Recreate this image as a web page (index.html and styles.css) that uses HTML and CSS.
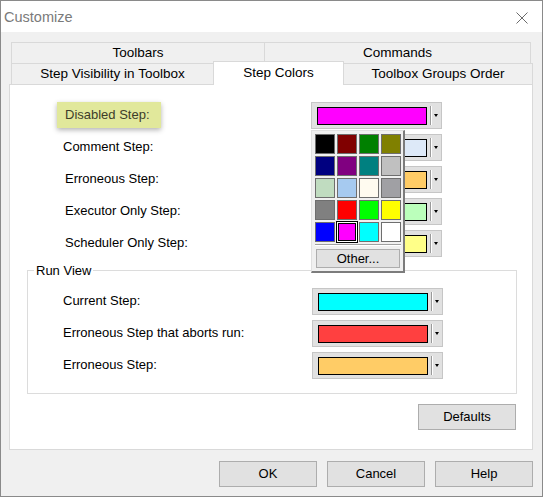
FILE: index.html
```html
<!DOCTYPE html>
<html>
<head>
<meta charset="utf-8">
<link rel="stylesheet" href="styles.css">
</head>
<body>
<div class="window">
  <div class="titlebar">
    <span class="title">Customize</span>
    <svg class="close" width="12" height="12" viewBox="0 0 12 12"><path d="M0.5 0.5 L11.5 11.5 M11.5 0.5 L0.5 11.5" stroke="#6b6b6b" stroke-width="1" fill="none"/></svg>
  </div>
  <div class="body">
    <div class="tabs">
      <div class="tabrow">
        <div class="tab t-toolbars">Toolbars</div>
        <div class="tab t-commands last">Commands</div>
      </div>
      <div class="tabrow">
        <div class="tab t-visibility">Step Visibility in Toolbox</div>
        <div class="tab t-colors active">Step Colors</div>
        <div class="tab t-groups last">Toolbox Groups Order</div>
      </div>
    </div>
    <div class="panel">
      <div class="rows">
        <div class="row">
          <div class="label"><span class="highlight">Disabled Step:</span></div>
          <div class="combo"><span class="swatch c-magenta"></span><span class="sep"></span><span class="arrow"></span></div>
        </div>
        <div class="row">
          <div class="label tight">Comment Step:</div>
          <div class="combo"><span class="swatch c-comment"></span><span class="sep"></span><span class="arrow"></span></div>
        </div>
        <div class="row">
          <div class="label">Erroneous Step:</div>
          <div class="combo"><span class="swatch c-orange"></span><span class="sep"></span><span class="arrow"></span></div>
        </div>
        <div class="row">
          <div class="label">Executor Only Step:</div>
          <div class="combo"><span class="swatch c-green"></span><span class="sep"></span><span class="arrow"></span></div>
        </div>
        <div class="row">
          <div class="label">Scheduler Only Step:</div>
          <div class="combo"><span class="swatch c-yellow"></span><span class="sep"></span><span class="arrow"></span></div>
        </div>
      </div>
      <fieldset class="group">
        <legend>Run View</legend>
        <div class="grows">
          <div class="row">
            <div class="label glabel">Current Step:</div>
            <div class="combo"><span class="swatch c-cyan"></span><span class="sep"></span><span class="arrow"></span></div>
          </div>
          <div class="row">
            <div class="label glabel">Erroneous Step that aborts run:</div>
            <div class="combo"><span class="swatch c-red"></span><span class="sep"></span><span class="arrow"></span></div>
          </div>
          <div class="row">
            <div class="label glabel">Erroneous Step:</div>
            <div class="combo"><span class="swatch c-orange"></span><span class="sep"></span><span class="arrow"></span></div>
          </div>
        </div>
      </fieldset>
      <div class="defaults-row"><div class="btn">Defaults</div></div>
    </div>
    <div class="buttons">
      <div class="btn">OK</div>
      <div class="btn">Cancel</div>
      <div class="btn">Help</div>
    </div>
  </div>
  <div class="popup">
    <div class="grid">
      <span class="cell" style="background:#000000"></span>
      <span class="cell" style="background:#800000"></span>
      <span class="cell" style="background:#008000"></span>
      <span class="cell" style="background:#808000"></span>
      <span class="cell" style="background:#000080"></span>
      <span class="cell" style="background:#800080"></span>
      <span class="cell" style="background:#008080"></span>
      <span class="cell" style="background:#c0c0c0"></span>
      <span class="cell" style="background:#c0dcc0"></span>
      <span class="cell" style="background:#a6caf0"></span>
      <span class="cell" style="background:#fffbf0"></span>
      <span class="cell" style="background:#a0a0a4"></span>
      <span class="cell" style="background:#808080"></span>
      <span class="cell" style="background:#ff0000"></span>
      <span class="cell" style="background:#00ff00"></span>
      <span class="cell" style="background:#ffff00"></span>
      <span class="cell" style="background:#0000ff"></span>
      <span class="cell selected" style="background:#ff00ff"></span>
      <span class="cell" style="background:#00ffff"></span>
      <span class="cell" style="background:#ffffff"></span>
    </div>
    <div class="psep"></div>
    <div class="other">Other...</div>
  </div>
</div>
</body>
</html>
```
FILE: styles.css
```css
html, body {
  margin: 0;
  padding: 0;
  background: #ffffff;
}
body {
  font-family: "Liberation Sans", Arial, sans-serif;
  font-size: 13px;
  color: #000;
}
.window {
  position: relative;
  width: 543px;
  height: 497px;
  box-sizing: border-box;
  border: 1px solid #8a8a8a;
  background: #f0f0f0;
  display: flex;
  flex-direction: column;
}
.titlebar {
  height: 31px;
  background: #ffffff;
  display: flex;
  align-items: center;
  padding-left: 3px;
  padding-right: 14px;
}
.title {
  font-size: 14.5px;
  color: #7a7a7a;
  flex: 1;
  margin-top: 1px;
}
.close {
  display: block;
  margin-top: 2px;
}
.body {
  flex: 1;
  padding: 10px 0 0 8px;
  display: flex;
  flex-direction: column;
}
.tabs {
  margin-left: 2px;
}
.tabrow {
  display: flex;
  height: 21px;
}
.tab {
  box-sizing: border-box;
  height: 21px;
  border-top: 1px solid #d9d9d9;
  border-left: 1px solid #d9d9d9;
  text-align: center;
  line-height: 20px;
  font-size: 13.5px;
  background: #f0f0f0;
  white-space: nowrap;
}
.tab.last {
  border-right: 1px solid #d9d9d9;
}
.t-toolbars { width: 253px; }
.t-commands { width: 267px; }
.t-visibility { width: 202px; }
.t-colors { width: 131px; }
.t-groups { width: 189px; }
.tab.active {
  position: relative;
  z-index: 2;
  background: #ffffff;
  height: 24px;
  margin-top: -2px;
  border-right: 1px solid #d9d9d9;
  line-height: 21px;
}
.tab.active + .tab {
  border-left: none;
}
.panel {
  box-sizing: border-box;
  width: 524px;
  height: 366px;
  border: 1px solid #d9d9d9;
  background: #ffffff;
  display: flex;
  flex-direction: column;
}
.rows {
  padding-top: 17px;
  padding-left: 55px;
  display: flex;
  flex-direction: column;
  gap: 5px;
}
.row {
  display: flex;
  align-items: center;
  height: 27px;
}
.label {
  width: 246px;
  padding-bottom: 2px;
  box-sizing: border-box;
  white-space: nowrap;
}
.label.tight {
  margin-left: -2px;
  width: 248px;
}
.highlight {
  display: inline-block;
  margin-left: -8px;
  padding: 0 8px 0 8px;
  width: 88px;
  height: 26px;
  line-height: 26px;
  background: #e1e89b;
  color: #3d3d2a;
  box-shadow: 0 2px 5px rgba(0, 0, 0, 0.3);
  margin-top: 1px;
}
.combo {
  box-sizing: border-box;
  width: 131px;
  height: 27px;
  background: #e1e1e1;
  border: 1px solid #c6c6c6;
  display: flex;
  align-items: center;
}
.swatch {
  display: block;
  box-sizing: border-box;
  margin-left: 5px;
  width: 110px;
  height: 18px;
  border: 1px solid #000;
}
.sep {
  display: block;
  margin-left: 3px;
  width: 1px;
  height: 19px;
  background: #9a9a9a;
  border-right: 1px solid #ffffff;
}
.arrow {
  display: block;
  margin-left: 2px;
  width: 0;
  height: 0;
  border-left: 2.5px solid transparent;
  border-right: 2.5px solid transparent;
  border-top: 3px solid #000;
}
.c-magenta { background: #ff00ff; }
.c-comment { background: #dde9f8; }
.c-orange { background: #ffcc66; }
.c-green { background: #bbffbb; }
.c-yellow { background: #ffff88; }
.c-cyan { background: #00ffff; }
.c-red { background: #ff4040; }
.group {
  box-sizing: border-box;
  margin: 6px 0 0 17px;
  width: 490px;
  padding: 0 0 14px 35px;
  border: 1px solid #dcdcdc;
  min-width: 0;
}
.group legend {
  padding: 0 2px;
  margin-left: -29px;
  line-height: 15px;
}
.grows {
  padding-top: 10px;
  display: flex;
  flex-direction: column;
  gap: 5px;
}
.glabel {
  width: 249px;
}
.defaults-row {
  display: flex;
  justify-content: flex-end;
  padding-right: 16px;
  margin-top: 10px;
}
.btn {
  box-sizing: border-box;
  width: 98px;
  height: 26px;
  background: #e1e1e1;
  border: 1px solid #adadad;
  text-align: center;
  line-height: 24px;
}
.buttons {
  display: flex;
  justify-content: flex-end;
  gap: 10px;
  margin-top: 11px;
  padding-right: 9px;
}
.popup {
  position: absolute;
  left: 310px;
  top: 129px;
  width: 94px;
  height: 143px;
  box-sizing: border-box;
  background: #f0f0f0;
  border-left: 1px solid #e0e0e0;
  border-top: 1px solid #e0e0e0;
  border-right: 2px solid #7c7c7c;
  border-bottom: 2px solid #7c7c7c;
  padding: 3px 0 0 3px;
  z-index: 5;
}
.grid {
  display: grid;
  grid-template-columns: repeat(4, 20px);
  grid-auto-rows: 20px;
  gap: 2px;
}
.cell {
  display: block;
  box-sizing: border-box;
  border: 1px solid #6e6e6e;
}
.cell.selected {
  border: 1px solid #ffffff;
  box-shadow: inset 0 0 0 1px #000;
  outline: 1px solid #000;
}
.psep {
  margin-top: 2px;
  width: 86px;
  height: 1px;
  background: #a0a0a0;
  border-bottom: 1px solid #ffffff;
}
.other {
  box-sizing: border-box;
  margin-top: 3px;
  margin-left: 1px;
  width: 84px;
  height: 19px;
  background: #e1e1e1;
  border: 1px solid #adadad;
  text-align: center;
  line-height: 17px;
}
```
